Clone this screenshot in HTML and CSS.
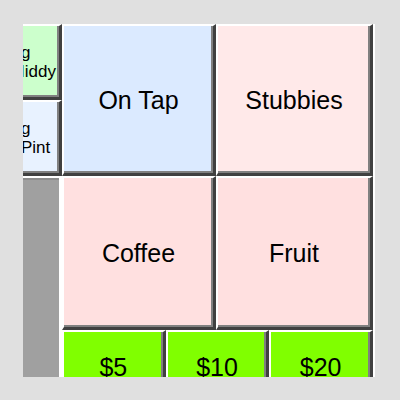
FILE: index.html
```html
<!DOCTYPE html>
<html lang="en">

<head>
    <meta charset="UTF-8">
    <meta name="viewport" content="width=device-width, initial-scale=1.0">
    <title>Till - Drinks</title>
    <link rel="stylesheet" href="styles.css">
</head>

<body>
    <div class="till">
        <div class="keypad">
            <!-- Quick glass sizes -->
            <button class="key small green middy">Long<br>Neck Middy</button>
            <button class="key small pale-blue pint">Long<br>Large Pint</button>

            <button class="key big blue tap">On Tap</button>
            <button class="key big rose stubbies">Stubbies</button>

            <div class="spacer"></div>

            <button class="key big pink coffee">Coffee</button>
            <button class="key big pink fruit">Fruit</button>

            <!-- Cash shortcuts -->
            <div class="cash">
                <button class="key lime">$5</button>
                <button class="key lime">$10</button>
                <button class="key lime">$20</button>
            </div>
        </div>
    </div>
</body>

</html>
```

FILE: styles.css
```css
* {
    margin: 0;
    padding: 0;
    box-sizing: border-box;
}

body {
    font-family: "Liberation Sans", Arial, sans-serif;
    background: #e0e0e0;
}

.till {
    margin: 24px 0 0 23px;
    width: 352px;
    height: 353px;
    background: #ffffff;
    overflow: hidden;
}

.keypad {
    display: grid;
    grid-template-columns: 100px 154px 157px;
    grid-template-rows: 76px 76px 154px 90px;
    grid-template-areas:
        "middy tap stubbies"
        "pint tap stubbies"
        "spacer coffee fruit"
        "spacer cash cash";
    margin-left: -61px;
}

.key {
    font-family: inherit;
    color: #000000;
    border-style: solid;
    border-width: 2px 3px 3px 2px;
    border-color: #ffffff #404040 #404040 #ffffff;
    box-shadow: inset -2px -2px 0 #808080;
    cursor: pointer;
}

.key.small {
    font-size: 17px;
    line-height: 19px;
    padding-top: 1px;
}

.key.big {
    font-size: 25px;
    padding-top: 2px;
}

.middy {
    grid-area: middy;
}

.pint {
    grid-area: pint;
}

.tap {
    grid-area: tap;
}

.stubbies {
    grid-area: stubbies;
}

.coffee {
    grid-area: coffee;
}

.fruit {
    grid-area: fruit;
}

.green {
    background: #ccffcc;
}

.pale-blue {
    background: #e8f2ff;
}

.blue {
    background: #dbeaff;
}

.rose {
    background: #ffe9e9;
}

.pink {
    background: #ffe0e0;
}

.lime {
    background: #80ff00;
}

.spacer {
    grid-area: spacer;
    margin: 2px 3px 0 0;
    background: #a0a0a0;
    border-top: 2px solid #8c8c8c;
}

.cash {
    grid-area: cash;
    display: grid;
    grid-template-columns: repeat(3, 1fr);
    align-items: start;
}

.cash .key {
    font-size: 25px;
    height: 76px;
}
```
